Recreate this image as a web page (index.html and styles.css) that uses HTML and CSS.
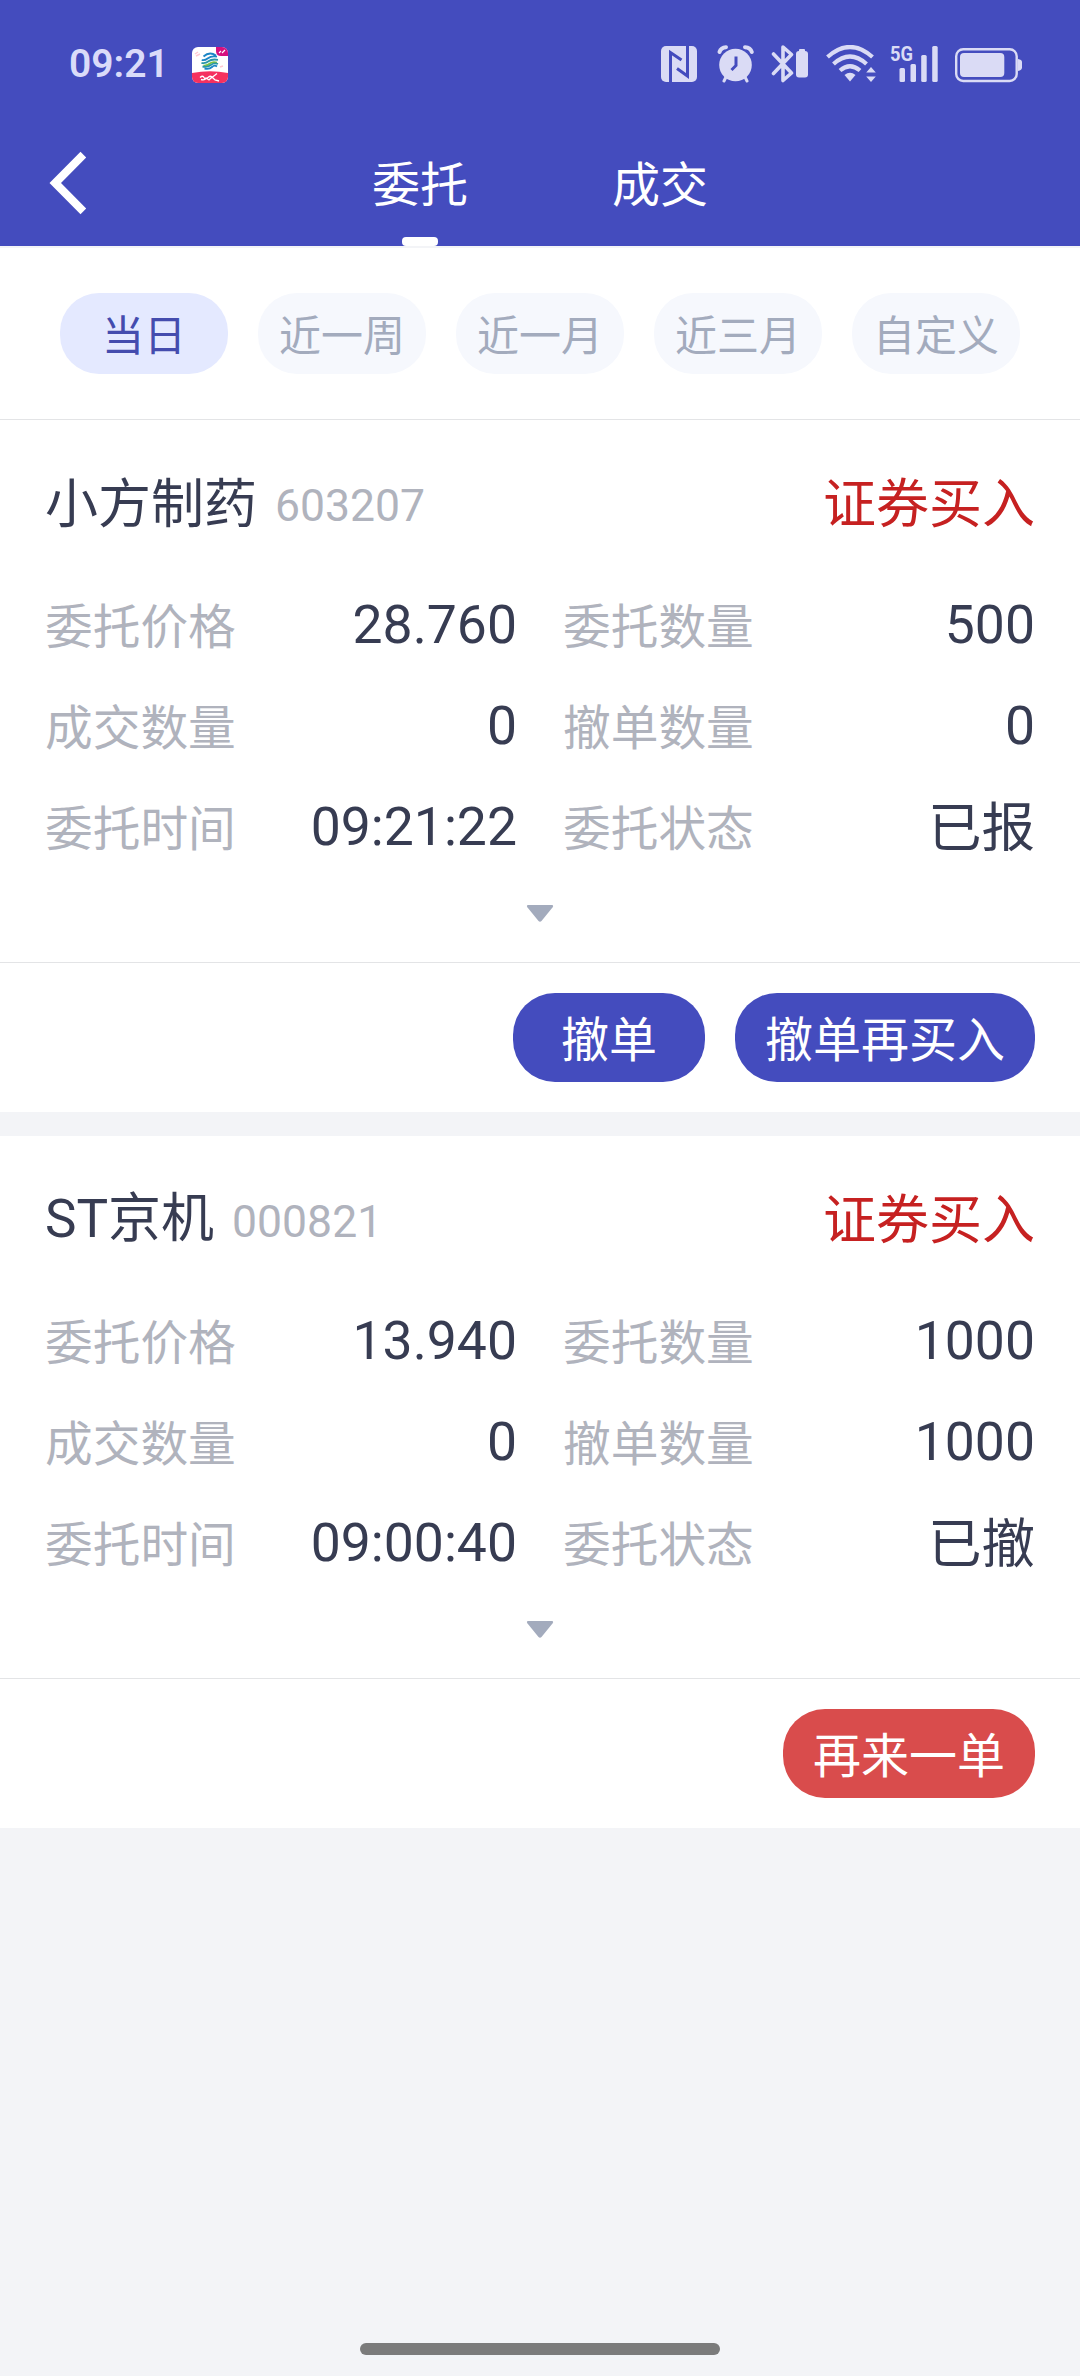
FILE: index.html
```html
<!DOCTYPE html>
<html lang="zh-CN">
<head>
  <meta charset="UTF-8">
  <title>委托</title>
  <link rel="stylesheet" href="styles.css">
</head>
<body>

<div class="header">
  <div class="status-bar">
    <span class="clock">09:21</span>
    <svg class="app-icon" width="36" height="36" viewBox="0 0 36 36">
      <defs>
        <clipPath id="app-shape"><rect width="36" height="36" rx="6"/></clipPath>
      </defs>
      <g clip-path="url(#app-shape)">
        <rect width="36" height="36" fill="#fff"/>
        <path d="M0 26q18-3.500 36 0v10H0z" fill="#f5315f"/>
        <path d="M24 0h12v9h-7q-5 0-5-5z" fill="#d6107f"/>
        <path d="M27 6l2-2M30 6l3-3" stroke="#fff" stroke-width="1.200"/>
        <path d="M3 7l3-2M4 9l4-2M28 20l3-1" stroke="#ffc9d2" stroke-width="1.500"/>
        <g fill="none" stroke-width="1.800">
          <path d="M11.500 9.500q6-5.500 12.500-1M9.700 13q3 .8 6.300-1.800t9-1.500" stroke="#1c86c6"/>
          <path d="M9.500 16q4 .8 7-1.700t9.500-1.500" stroke="#2a96a8"/>
          <path d="M11.500 18.500q4 .3 6.500-2t7-1" stroke="#7cc242"/>
          <path d="M10.500 19.500q5 1.200 8.300-1.500t7.200-1" stroke="#2a96a8"/>
          <path d="M12.500 21.500q5 1 7.500-1.500t5-.5" stroke="#1c86c6"/>
        </g>
        <path d="M8 30.500q3-2.500 4 0t4 0 4 0l5-4M9 32.500q4 1 5-1.500l3 2 3-3 3 3 4 1" fill="none" stroke="#fff" stroke-width="1.300"/>
      </g>
    </svg>

    <div class="status-icons">
      <!-- nfc -->
      <svg width="43" height="38" viewBox="660 45 43 38">
        <rect x="661" y="46" width="36" height="36" rx="5"/>
        <path class="cut" d="M670.500 82V52.500L681.500 60M687.500 46V76L677 68.500"/>
      </svg>
      <!-- alarm -->
      <svg width="43" height="38" viewBox="715 45 43 38">
        <circle cx="735.500" cy="65" r="16.300"/>
        <path class="line" d="M719.500 52Q721 47.500 726 47.200M745 47.200Q750.500 47.500 751.800 52" stroke-width="4"/>
        <path class="line" d="M726 77l-2 4M745 77l2 4" stroke-width="3"/>
        <path class="cut" d="M736 56.500V65.500L731.500 70"/>
      </svg>
      <!-- bluetooth with battery -->
      <svg width="42" height="38" viewBox="770 45 42 38">
        <path class="line" d="M773.500 54L791.500 73 783 80.500V47L791.500 54.500 773.500 73.500" stroke-width="3.600"/>
        <rect x="796" y="51" width="12" height="26.500" rx="3"/>
        <rect x="799" y="49" width="6" height="4" rx="1"/>
      </svg>
      <!-- wifi -->
      <svg width="53" height="38" viewBox="824 45 53 38">
        <g class="line" stroke-width="4.200">
          <path d="M827.500 57Q850 37 872.500 57" stroke-linecap="butt"/>
          <path d="M833.500 64Q850 49 866.500 64" stroke-linecap="butt"/>
          <path d="M840 70.500Q850 62 860 70.500" stroke-linecap="butt"/>
        </g>
        <path d="M844.500 75q5.500-4.500 11 0L850 81.500z"/>
        <path d="M871 67l4.800 5.500h-9.600zM871 82l4.800-5.500h-9.600z"/>
      </svg>
      <!-- 5G signal -->
      <svg class="signal" width="52" height="42" viewBox="889 41 52 42">
        <text x="890" y="61" class="net" textLength="23" lengthAdjust="spacingAndGlyphs">5G</text>
        <rect x="899.500" y="68" width="5.500" height="14" rx="1.500"/>
        <rect x="910.500" y="64" width="5.500" height="18" rx="1.500"/>
        <rect x="921.200" y="55" width="5.500" height="27" rx="1.500"/>
        <rect x="932.200" y="46" width="5.500" height="36" rx="1.500"/>
      </svg>
      <!-- battery -->
      <svg width="70" height="38" viewBox="953 45 70 38">
        <rect class="line" x="956.200" y="49.200" width="60.500" height="31.800" rx="7" stroke-width="2.400"/>
        <rect x="960" y="53" width="44.300" height="24" rx="4"/>
        <path d="M1018 59q4 .5 4 3v5.500q0 2.500-4 3.500z"/>
      </svg>
    </div>
  </div>

  <div class="nav">
    <svg class="back" width="40" height="64" viewBox="48 151 40 64">
      <path d="M80.500 151.700L86.200 157.600 61 183 86.200 208.500 80.500 214.300 49.500 183z"/>
    </svg>
    <div class="tab active">委托</div>
    <div class="tab">成交</div>
  </div>
</div>

<div class="filters">
  <div class="chip selected">当日</div>
  <div class="chip">近一周</div>
  <div class="chip">近一月</div>
  <div class="chip">近三月</div>
  <div class="chip">自定义</div>
</div>

<div class="order">
  <div class="order-body">
    <div class="order-head">
      <span class="name cjk">小方制药</span>
      <span class="code">603207</span>
      <span class="side cjk">证券买入</span>
    </div>
    <div class="fields">
      <div class="field"><span class="label">委托价格</span><span class="value">28.760</span></div>
      <div class="field"><span class="label">委托数量</span><span class="value">500</span></div>
      <div class="field"><span class="label">成交数量</span><span class="value">0</span></div>
      <div class="field"><span class="label">撤单数量</span><span class="value">0</span></div>
      <div class="field"><span class="label">委托时间</span><span class="value">09:21:22</span></div>
      <div class="field"><span class="label">委托状态</span><span class="value cjk">已报</span></div>
    </div>
    <svg class="expand" width="28" height="18" viewBox="0 0 28 18">
      <path d="M2 0h24q2 .5 .5 2.500L15.500 16q-1.500 1.500-3 0L1.500 2.500Q0 .5 2 0z"/>
    </svg>
  </div>
  <div class="actions">
    <button class="btn">撤单</button>
    <button class="btn">撤单再买入</button>
  </div>
</div>

<div class="order">
  <div class="order-body">
    <div class="order-head">
      <span class="name">ST京机</span>
      <span class="code">000821</span>
      <span class="side cjk">证券买入</span>
    </div>
    <div class="fields">
      <div class="field"><span class="label">委托价格</span><span class="value">13.940</span></div>
      <div class="field"><span class="label">委托数量</span><span class="value">1000</span></div>
      <div class="field"><span class="label">成交数量</span><span class="value">0</span></div>
      <div class="field"><span class="label">撤单数量</span><span class="value">1000</span></div>
      <div class="field"><span class="label">委托时间</span><span class="value">09:00:40</span></div>
      <div class="field"><span class="label">委托状态</span><span class="value cjk">已撤</span></div>
    </div>
    <svg class="expand" width="28" height="18" viewBox="0 0 28 18">
      <path d="M2 0h24q2 .5 .5 2.500L15.500 16q-1.500 1.500-3 0L1.500 2.500Q0 .5 2 0z"/>
    </svg>
  </div>
  <div class="actions">
    <button class="btn red">再来一单</button>
  </div>
</div>

<div class="home-bar"></div>

</body>
</html>
```
FILE: styles.css
```css
* {
  box-sizing: border-box;
}

body {
  margin: 0;
  height: 2376px;
  display: flex;
  flex-direction: column;
  background-color: #f3f4f7;
  font-family: Roboto, "Noto Sans CJK SC", sans-serif;
  color: #373c52;
}

.header {
  height: 246px;
  background-color: #444cbe;
  color: #ffffff;
}

.status-bar {
  height: 120px;
  padding: 8px 57px 0 69px;
  display: flex;
  align-items: center;
}

.clock {
  width: 123px;
  font-size: 39px;
  font-weight: 600;
  line-height: 46px;
  color: #dadbf9;
}

.app-icon {
  margin-top: 2px;
}

.status-icons {
  margin-left: auto;
  display: flex;
  align-items: flex-end;
  gap: 12px;
  fill: #dadbf5;
}

.signal {
  margin-top: -4px;
}

.line {
  fill: none;
  stroke: #dadbf5;
  stroke-linecap: round;
  stroke-linejoin: round;
}

.cut {
  fill: none;
  stroke: #444cbe;
  stroke-width: 3;
}

.net {
  font-size: 21px;
  font-weight: 700;
}

.nav {
  height: 126px;
  padding-left: 48px;
  display: flex;
}

.back {
  margin-top: 31px;
  margin-right: 212px;
  fill: #ffffff;
}

.tab {
  width: 240px;
  display: flex;
  flex-direction: column;
  align-items: center;
  justify-content: space-between;
  font-size: 48px;
  line-height: 132px;
}

.tab.active::after {
  content: "";
  width: 36px;
  height: 9px;
  flex-shrink: 0;
  margin-top: -15px;
  border-radius: 4px;
  background-color: #ffffff;
}

.filters {
  height: 174px;
  padding: 45px 60px 0;
  display: flex;
  gap: 30px;
  background-color: #ffffff;
  border-top: 2px solid #f3f4f7;
  border-bottom: 1px solid #e3e4e6;
}

.chip {
  width: 168px;
  height: 81px;
  border-radius: 39px;
  background-color: #f6f8fd;
  color: #a3abbd;
  font-size: 42px;
  line-height: 87px;
  text-align: center;
}

.chip.selected {
  background-color: #e4e9ff;
  color: #444cae;
}

.order {
  margin-bottom: 24px;
  background-color: #ffffff;
}

.order-body {
  height: 543px;
  padding: 53px 45px 0;
  border-bottom: 1px solid #e3e4e6;
}

.order-head {
  height: 60px;
  display: flex;
  align-items: flex-start;
  line-height: 60px;
}

.name {
  font-size: 53px;
}

.code {
  margin-left: 18px;
  padding-top: 3px;
  font-size: 44.5px;
  color: #b0b3bd;
}

.side {
  margin-left: auto;
  font-size: 53px;
  color: #c62121;
}

/* Chinese glyphs sit a little high next to the digits */
.cjk {
  padding-top: 2px;
}

.fields {
  margin-top: 41px;
  display: grid;
  grid-template-columns: 1fr 1fr;
  column-gap: 46px;
}

.field {
  height: 101px;
  display: flex;
  justify-content: space-between;
  align-items: flex-start;
  line-height: 101px;
}

.label {
  padding-top: 4px;
  font-size: 47.7px;
  color: #b0b3bd;
}

.value {
  font-size: 53.5px;
}

.expand {
  display: block;
  margin: 28px auto 0;
  fill: #a3abbd;
}

.actions {
  height: 149px;
  padding: 30px 45px;
  display: flex;
  justify-content: flex-end;
  gap: 30px;
}

.btn {
  min-width: 192px;
  height: 89px;
  padding: 6px 30px 0;
  border: none;
  border-radius: 42px;
  background-color: #444cbe;
  color: #ffffff;
  font-family: inherit;
  font-size: 48px;
  line-height: 83px;
}

.btn.red {
  background-color: #d94c4c;
}

.home-bar {
  width: 360px;
  height: 12px;
  margin: auto auto 21px;
  border-radius: 6px;
  background-color: #7b7b7b;
}
```
